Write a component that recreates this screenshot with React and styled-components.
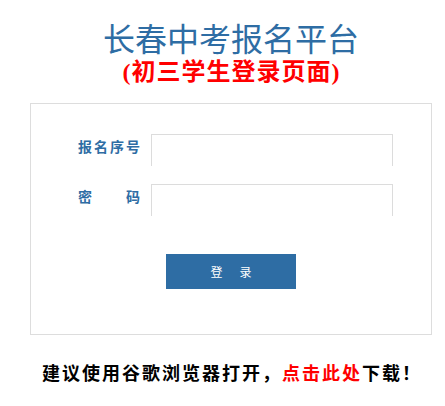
import React from "react";
import styled, { createGlobalStyle } from "styled-components";

const GlobalStyle = createGlobalStyle`
  html, body {
    margin: 0;
    padding: 0;
    background: #ffffff;
  }
  body {
    font-family: "Noto Sans CJK SC", "Noto Sans", sans-serif;
  }
`;

const Page = styled.div`
  width: 402px;
  padding-left: 30px;
  padding-top: 17px;
`;

const Header = styled.header`
  text-align: center;
`;

const Title = styled.h1`
  margin: 0;
  font-size: 32px;
  line-height: 40px;
  font-weight: 400;
  color: #2e6da4;
`;

const Subtitle = styled.h2`
  margin: 0;
  font-family: "Liberation Serif", "Noto Sans CJK SC", serif;
  font-size: 24px;
  line-height: 30px;
  font-weight: 700;
  letter-spacing: 1px;
  padding-left: 1px;
  color: #ff0000;
`;

const Panel = styled.form`
  margin-top: 16px;
  border: 1px solid #dddddd;
  padding: 30px 0 45px 47px;
  display: flex;
  flex-direction: column;
`;

const Field = styled.div`
  display: grid;
  grid-template-columns: 62px 242px;
  column-gap: 11px;
  align-items: start;
  & + & {
    margin-top: 18px;
  }
`;

const Label = styled.label`
  display: flex;
  justify-content: space-between;
  font-size: 14px;
  line-height: 24px;
  font-weight: 700;
  color: #2e6da4;
`;

const Input = styled.input`
  box-sizing: border-box;
  width: 242px;
  height: 32px;
  margin: 0;
  padding: 0 8px;
  border: 1px solid #dcdcdc;
  border-bottom: none;
  outline: none;
  background: #ffffff;
  font-size: 14px;
  font-family: inherit;
`;

const SubmitButton = styled.button`
  align-self: flex-start;
  margin: 38px 0 0 88px;
  width: 130px;
  height: 35px;
  border: none;
  background: #2e6da4;
  color: #ffffff;
  font-family: inherit;
  font-size: 12px;
  letter-spacing: 2.5px;
  padding: 0 0 0 2.5px;
  cursor: pointer;
`;

const Notice = styled.p`
  margin: 25px 0 0;
  text-align: center;
  font-size: 18px;
  line-height: 24px;
  font-weight: 700;
  letter-spacing: 2px;
  padding-left: 2px;
  color: #000000;
`;

const DownloadLink = styled.a`
  color: #ff0000;
  text-decoration: none;
`;

const chars = (text) => [...text].map((c, i) => <span key={i}>{c}</span>);

export default function App() {
  return (
    <>
      <GlobalStyle />
      <Page>
        <Header>
          <Title>长春中考报名平台</Title>
          <Subtitle>(初三学生登录页面)</Subtitle>
        </Header>
        <Panel onSubmit={(e) => e.preventDefault()}>
          <Field>
            <Label htmlFor="regno">{chars("报名序号")}</Label>
            <Input id="regno" type="text" />
          </Field>
          <Field>
            <Label htmlFor="pwd">{chars("密码")}</Label>
            <Input id="pwd" type="password" />
          </Field>
          <SubmitButton type="submit">登　录</SubmitButton>
        </Panel>
        <Notice>
          建议使用谷歌浏览器打开，<DownloadLink href="#">点击此处</DownloadLink>下载！
        </Notice>
      </Page>
    </>
  );
}
